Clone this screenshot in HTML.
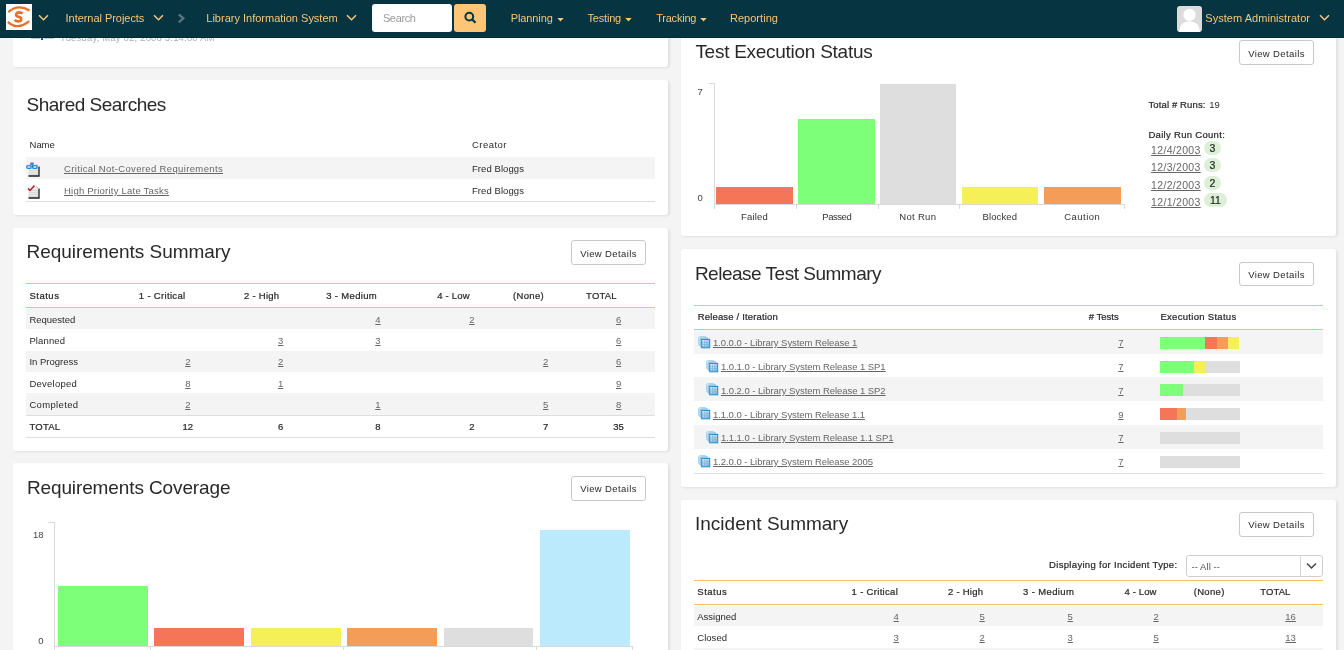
<!DOCTYPE html>
<html><head><meta charset="utf-8"><title>Dashboard</title>
<style>
*{box-sizing:border-box;margin:0;padding:0}
html,body{width:1344px;height:650px;overflow:hidden;background:#f4f4f4;font-family:"Liberation Sans",sans-serif;color:#333;position:relative}
.tx{position:absolute;white-space:nowrap}
.bx{position:absolute}
#hdr{position:absolute;left:0;top:0;width:1344px;height:38px;background:#073441;border-bottom:1px solid #032a37;z-index:10}
.card{position:absolute;background:#fff;border-radius:3px;box-shadow:1.5px 1px 2.5px rgba(0,0,0,0.08)}
.btn{position:absolute;width:75px;height:25px;border:1px solid #c9c9c9;border-radius:3px;background:#fff}
</style></head><body>
<div id="wrap" style="position:absolute;left:0;top:0;width:1344px;height:650px;will-change:transform">
<div class="card" style="left:13px;top:-40px;width:655px;height:107px"></div>
<div class="card" style="left:13px;top:80px;width:655px;height:135px"></div>
<div class="card" style="left:13px;top:228px;width:655px;height:223px"></div>
<div class="card" style="left:13px;top:463px;width:655px;height:237px"></div>
<div class="card" style="left:681px;top:-40px;width:655px;height:276px"></div>
<div class="card" style="left:681px;top:249px;width:655px;height:238px"></div>
<div class="card" style="left:681px;top:500px;width:655px;height:200px"></div>
<div class="tx" style="left:60.00px;top:33px;font-size:9.5px;line-height:9.5px;color:#acacac;letter-spacing:0.181px;">Tuesday, May 02, 2006 3:14:00 AM</div>
<svg class="bx" style="left:30px;top:33px" width="26" height="8"><path d="M1 5.5 H10 M14 5.5 H24" stroke="#c8c8c8" stroke-width="1.2" fill="none"/><rect x="11" y="2" width="2" height="5" fill="#2b3fb8"/></svg>
<div class="tx" style="left:26.50px;top:95px;font-size:19px;line-height:19px;color:#292929;letter-spacing:-0.500px;">Shared Searches</div>
<div class="tx" style="left:29.60px;top:140px;font-size:9.5px;line-height:9.5px;color:#292929;letter-spacing:-0.060px;">Name</div>
<div class="tx" style="left:472.00px;top:140px;font-size:9.5px;line-height:9.5px;color:#292929;letter-spacing:0.475px;">Creator</div>
<div class="bx" style="left:26px;top:157px;width:629px;height:22px;background:#f4f4f4;"></div>
<div class="bx" style="left:26px;top:201px;width:629px;height:1px;background:#dedede;"></div>
<div class="tx" style="left:64.00px;top:164px;font-size:9.5px;line-height:9.5px;color:#666;letter-spacing:0.355px;text-decoration:underline;">Critical Not-Covered Requirements</div>
<div class="tx" style="left:472.00px;top:164px;font-size:9.5px;line-height:9.5px;color:#292929;letter-spacing:0.071px;">Fred Bloggs</div>
<div class="tx" style="left:64.00px;top:186px;font-size:9.5px;line-height:9.5px;color:#666;letter-spacing:0.225px;text-decoration:underline;">High Priority Late Tasks</div>
<div class="tx" style="left:472.00px;top:186px;font-size:9.5px;line-height:9.5px;color:#292929;letter-spacing:0.071px;">Fred Bloggs</div>
<svg class="bx" style="left:26px;top:162px" width="16" height="16" viewBox="0 0 16 16">
<path d="M2 2.5 H10.5 L13 5 V14 H2Z" fill="#ebebeb"/>
<path d="M3 6.5 H12 M3 8.5 H12 M3 10.5 H12 M3 12.5 H12" stroke="#d2d2d2" stroke-width="0.8"/>
<path d="M13 4.5 V14 H2.5" stroke="#1e1e1e" stroke-width="1.3" fill="none"/>
<path d="M10 2.3 L13 5" stroke="#bbb" stroke-width="1"/>
</svg>
<svg class="bx" style="left:26px;top:162px" width="12" height="8" viewBox="0 0 12 8">
<rect x="4.2" y="0.5" width="3.6" height="2.6" rx="0.8" fill="#1d8fd6"/>
<rect x="0.8" y="3.6" width="4.2" height="2.8" rx="1" fill="none" stroke="#1d8fd6" stroke-width="1.4"/>
<rect x="6.8" y="3.6" width="4.2" height="2.8" rx="1" fill="none" stroke="#1d8fd6" stroke-width="1.4"/>
<path d="M6 3 V5 H7" stroke="#1d8fd6" stroke-width="1"/>
</svg>
<svg class="bx" style="left:26px;top:184px" width="16" height="16" viewBox="0 0 16 16">
<path d="M2 2.5 H10.5 L13 5 V14 H2Z" fill="#ebebeb"/>
<path d="M3 6.5 H12 M3 8.5 H12 M3 10.5 H12 M3 12.5 H12" stroke="#d2d2d2" stroke-width="0.8"/>
<path d="M13 4.5 V14 H2.5" stroke="#1e1e1e" stroke-width="1.3" fill="none"/>
<path d="M10 2.3 L13 5" stroke="#bbb" stroke-width="1"/>
</svg>
<svg class="bx" style="left:26px;top:184px" width="12" height="10" viewBox="0 0 12 10">
<path d="M2 4.5 L4 6.5 L8.5 1.5" stroke="#b0202a" stroke-width="1.5" fill="none"/>
</svg>
<div class="tx" style="left:26.50px;top:242px;font-size:19px;line-height:19px;color:#292929;letter-spacing:-0.042px;">Requirements Summary</div>
<div class="btn" style="left:571px;top:240px;height:25px"></div>
<div class="tx" style="left:580.15px;top:249px;font-size:9.5px;line-height:9.5px;color:#292929;letter-spacing:0.384px;">View Details</div>
<div class="bx" style="left:26px;top:283px;width:629px;height:1px;background:#f9bd6e;"></div>
<div class="bx" style="left:26px;top:307px;width:629px;height:1px;background:#f9bd6e;"></div>
<div class="tx" style="left:29.40px;top:291px;font-size:9.5px;line-height:9.5px;color:#292929;-webkit-text-stroke:0.22px currentColor;letter-spacing:0.511px;">Status</div>
<div class="tx" style="left:138.80px;top:291px;font-size:9.5px;line-height:9.5px;color:#292929;-webkit-text-stroke:0.22px currentColor;letter-spacing:0.329px;">1 - Critical</div>
<div class="tx" style="left:244.00px;top:291px;font-size:9.5px;line-height:9.5px;color:#292929;-webkit-text-stroke:0.22px currentColor;letter-spacing:0.267px;">2 - High</div>
<div class="tx" style="left:326.30px;top:291px;font-size:9.5px;line-height:9.5px;color:#292929;-webkit-text-stroke:0.22px currentColor;letter-spacing:0.319px;">3 - Medium</div>
<div class="tx" style="left:437.30px;top:291px;font-size:9.5px;line-height:9.5px;color:#292929;-webkit-text-stroke:0.22px currentColor;letter-spacing:0.193px;">4 - Low</div>
<div class="tx" style="left:513.00px;top:291px;font-size:9.5px;line-height:9.5px;color:#292929;-webkit-text-stroke:0.22px currentColor;letter-spacing:0.327px;">(None)</div>
<div class="tx" style="left:586.10px;top:291px;font-size:9.5px;line-height:9.5px;color:#292929;-webkit-text-stroke:0.22px currentColor;letter-spacing:0.153px;">TOTAL</div>
<div class="bx" style="left:26px;top:308px;width:629px;height:21px;background:#f4f4f4;"></div>
<div class="tx" style="left:29.40px;top:315px;font-size:9.5px;line-height:9.5px;color:#292929;letter-spacing:-0.005px;">Requested</div>
<div class="tx" style="left:375.26px;top:315px;font-size:9.5px;line-height:9.5px;color:#666;text-decoration:underline;">4</div>
<div class="tx" style="left:469.26px;top:315px;font-size:9.5px;line-height:9.5px;color:#666;text-decoration:underline;">2</div>
<div class="tx" style="left:615.96px;top:315px;font-size:9.5px;line-height:9.5px;color:#666;text-decoration:underline;">6</div>
<div class="tx" style="left:29.40px;top:336px;font-size:9.5px;line-height:9.5px;color:#292929;letter-spacing:0.134px;">Planned</div>
<div class="tx" style="left:278.06px;top:336px;font-size:9.5px;line-height:9.5px;color:#666;text-decoration:underline;">3</div>
<div class="tx" style="left:375.26px;top:336px;font-size:9.5px;line-height:9.5px;color:#666;text-decoration:underline;">3</div>
<div class="tx" style="left:615.96px;top:336px;font-size:9.5px;line-height:9.5px;color:#666;text-decoration:underline;">6</div>
<div class="bx" style="left:26px;top:351px;width:629px;height:21px;background:#f4f4f4;"></div>
<div class="tx" style="left:29.40px;top:357px;font-size:9.5px;line-height:9.5px;color:#292929;letter-spacing:-0.007px;">In Progress</div>
<div class="tx" style="left:185.16px;top:357px;font-size:9.5px;line-height:9.5px;color:#666;text-decoration:underline;">2</div>
<div class="tx" style="left:278.06px;top:357px;font-size:9.5px;line-height:9.5px;color:#666;text-decoration:underline;">2</div>
<div class="tx" style="left:543.06px;top:357px;font-size:9.5px;line-height:9.5px;color:#666;text-decoration:underline;">2</div>
<div class="tx" style="left:615.96px;top:357px;font-size:9.5px;line-height:9.5px;color:#666;text-decoration:underline;">6</div>
<div class="tx" style="left:29.40px;top:379px;font-size:9.5px;line-height:9.5px;color:#292929;letter-spacing:0.253px;">Developed</div>
<div class="tx" style="left:185.16px;top:379px;font-size:9.5px;line-height:9.5px;color:#666;text-decoration:underline;">8</div>
<div class="tx" style="left:278.06px;top:379px;font-size:9.5px;line-height:9.5px;color:#666;text-decoration:underline;">1</div>
<div class="tx" style="left:615.96px;top:379px;font-size:9.5px;line-height:9.5px;color:#666;text-decoration:underline;">9</div>
<div class="bx" style="left:26px;top:393px;width:629px;height:22px;background:#f4f4f4;"></div>
<div class="tx" style="left:29.40px;top:400px;font-size:9.5px;line-height:9.5px;color:#292929;letter-spacing:0.340px;">Completed</div>
<div class="tx" style="left:185.16px;top:400px;font-size:9.5px;line-height:9.5px;color:#666;text-decoration:underline;">2</div>
<div class="tx" style="left:375.26px;top:400px;font-size:9.5px;line-height:9.5px;color:#666;text-decoration:underline;">1</div>
<div class="tx" style="left:543.06px;top:400px;font-size:9.5px;line-height:9.5px;color:#666;text-decoration:underline;">5</div>
<div class="tx" style="left:615.96px;top:400px;font-size:9.5px;line-height:9.5px;color:#666;text-decoration:underline;">8</div>
<div class="bx" style="left:26px;top:415px;width:629px;height:1px;background:#dedede;"></div>
<div class="tx" style="left:29.40px;top:422px;font-size:9.5px;line-height:9.5px;color:#292929;-webkit-text-stroke:0.22px currentColor;letter-spacing:0.253px;">TOTAL</div>
<div class="tx" style="left:182.52px;top:422px;font-size:9.5px;line-height:9.5px;color:#292929;-webkit-text-stroke:0.22px currentColor;">12</div>
<div class="tx" style="left:278.06px;top:422px;font-size:9.5px;line-height:9.5px;color:#292929;-webkit-text-stroke:0.22px currentColor;">6</div>
<div class="tx" style="left:375.26px;top:422px;font-size:9.5px;line-height:9.5px;color:#292929;-webkit-text-stroke:0.22px currentColor;">8</div>
<div class="tx" style="left:469.26px;top:422px;font-size:9.5px;line-height:9.5px;color:#292929;-webkit-text-stroke:0.22px currentColor;">2</div>
<div class="tx" style="left:543.06px;top:422px;font-size:9.5px;line-height:9.5px;color:#292929;-webkit-text-stroke:0.22px currentColor;">7</div>
<div class="tx" style="left:613.32px;top:422px;font-size:9.5px;line-height:9.5px;color:#292929;-webkit-text-stroke:0.22px currentColor;">35</div>
<div class="bx" style="left:26px;top:437px;width:629px;height:1px;background:#dedede;"></div>
<div class="tx" style="left:26.90px;top:478px;font-size:19px;line-height:19px;color:#292929;letter-spacing:-0.115px;">Requirements Coverage</div>
<div class="btn" style="left:571px;top:476px;height:25px"></div>
<div class="tx" style="left:580.15px;top:484px;font-size:9.5px;line-height:9.5px;color:#292929;letter-spacing:0.384px;">View Details</div>
<div class="bx" style="left:54px;top:522px;width:1px;height:124px;background:#dadada;"></div>
<div class="bx" style="left:48px;top:522px;width:7px;height:1px;background:#dadada;"></div>
<div class="bx" style="left:54px;top:646px;width:579px;height:1px;background:#dadada;"></div>
<div class="bx" style="left:54px;top:646px;width:1px;height:4px;background:#dadada;"></div>
<div class="bx" style="left:150px;top:646px;width:1px;height:4px;background:#dadada;"></div>
<div class="bx" style="left:343px;top:646px;width:1px;height:4px;background:#dadada;"></div>
<div class="bx" style="left:536px;top:646px;width:1px;height:4px;background:#dadada;"></div>
<div class="bx" style="left:632px;top:646px;width:1px;height:4px;background:#dadada;"></div>
<div class="tx" style="left:32.93px;top:530px;font-size:9.5px;line-height:9.5px;color:#444;">18</div>
<div class="tx" style="left:38.22px;top:636px;font-size:9.5px;line-height:9.5px;color:#444;">0</div>
<div class="bx" style="left:58px;top:586px;width:90px;height:60px;background:#7dff7a;"></div>
<div class="bx" style="left:154px;top:628px;width:90px;height:18px;background:#f47557;"></div>
<div class="bx" style="left:251px;top:628px;width:90px;height:18px;background:#f5f058;"></div>
<div class="bx" style="left:347px;top:628px;width:90px;height:18px;background:#f39d58;"></div>
<div class="bx" style="left:444px;top:628px;width:89px;height:18px;background:#dedede;"></div>
<div class="bx" style="left:540px;top:530px;width:90px;height:116px;background:#bbeafd;"></div>
<div class="tx" style="left:695.40px;top:42px;font-size:19px;line-height:19px;color:#292929;letter-spacing:-0.271px;">Test Execution Status</div>
<div class="btn" style="left:1239px;top:40px;height:25px"></div>
<div class="tx" style="left:1248.15px;top:49px;font-size:9.5px;line-height:9.5px;color:#292929;letter-spacing:0.384px;">View Details</div>
<div class="bx" style="left:714px;top:83px;width:1px;height:121px;background:#dadada;"></div>
<div class="bx" style="left:709px;top:83px;width:6px;height:1px;background:#dadada;"></div>
<div class="bx" style="left:714px;top:204px;width:411px;height:1px;background:#dadada;"></div>
<div class="bx" style="left:714px;top:204px;width:1px;height:5px;background:#dadada;"></div>
<div class="bx" style="left:796px;top:204px;width:1px;height:5px;background:#dadada;"></div>
<div class="bx" style="left:878px;top:204px;width:1px;height:5px;background:#dadada;"></div>
<div class="bx" style="left:959px;top:204px;width:1px;height:5px;background:#dadada;"></div>
<div class="bx" style="left:1124px;top:204px;width:1px;height:5px;background:#dadada;"></div>
<div class="tx" style="left:697.62px;top:87px;font-size:9.5px;line-height:9.5px;color:#444;">7</div>
<div class="tx" style="left:697.62px;top:193px;font-size:9.5px;line-height:9.5px;color:#444;">0</div>
<div class="bx" style="left:716px;top:187px;width:77px;height:17px;background:#f47557;"></div>
<div class="bx" style="left:798px;top:119px;width:77px;height:85px;background:#7dff7a;"></div>
<div class="bx" style="left:880px;top:84px;width:76px;height:120px;background:#dedede;"></div>
<div class="bx" style="left:962px;top:187px;width:76px;height:17px;background:#f5f058;"></div>
<div class="bx" style="left:1044px;top:187px;width:77px;height:17px;background:#f39d58;"></div>
<div class="tx" style="left:741.00px;top:212px;font-size:9.5px;line-height:9.5px;color:#333;letter-spacing:0.188px;">Failed</div>
<div class="tx" style="left:822.30px;top:212px;font-size:9.5px;line-height:9.5px;color:#333;letter-spacing:-0.448px;">Passed</div>
<div class="tx" style="left:899.30px;top:212px;font-size:9.5px;line-height:9.5px;color:#333;letter-spacing:0.307px;">Not Run</div>
<div class="tx" style="left:982.50px;top:212px;font-size:9.5px;line-height:9.5px;color:#333;letter-spacing:0.115px;">Blocked</div>
<div class="tx" style="left:1064.25px;top:212px;font-size:9.5px;line-height:9.5px;color:#333;letter-spacing:0.480px;">Caution</div>
<div class="tx" style="left:1148.40px;top:100px;font-size:9.5px;line-height:9.5px;color:#292929;-webkit-text-stroke:0.22px currentColor;letter-spacing:0.135px;">Total # Runs:</div>
<div class="tx" style="left:1209.20px;top:100px;font-size:9.5px;line-height:9.5px;color:#292929;letter-spacing:0.117px;">19</div>
<div class="tx" style="left:1148.40px;top:130px;font-size:9.5px;line-height:9.5px;color:#292929;-webkit-text-stroke:0.22px currentColor;letter-spacing:0.306px;">Daily Run Count:</div>
<div class="tx" style="left:1151.10px;top:145px;font-size:10.5px;line-height:10.5px;color:#666;letter-spacing:0.321px;text-decoration:underline;">12/4/2003</div>
<div class="bx" style="left:1204.3px;top:141px;width:16.4px;height:14px;background:#dcf0d6;border-radius:7px"></div>
<div class="tx" style="left:1209.58px;top:143px;font-size:10.5px;line-height:10.5px;color:#292929;-webkit-text-stroke:0.22px currentColor;">3</div>
<div class="tx" style="left:1151.10px;top:162px;font-size:10.5px;line-height:10.5px;color:#666;letter-spacing:0.321px;text-decoration:underline;">12/3/2003</div>
<div class="bx" style="left:1204.3px;top:158px;width:16.4px;height:14px;background:#dcf0d6;border-radius:7px"></div>
<div class="tx" style="left:1209.58px;top:160px;font-size:10.5px;line-height:10.5px;color:#292929;-webkit-text-stroke:0.22px currentColor;">3</div>
<div class="tx" style="left:1151.10px;top:180px;font-size:10.5px;line-height:10.5px;color:#666;letter-spacing:0.321px;text-decoration:underline;">12/2/2003</div>
<div class="bx" style="left:1204.3px;top:176px;width:16.4px;height:14px;background:#dcf0d6;border-radius:7px"></div>
<div class="tx" style="left:1209.58px;top:178px;font-size:10.5px;line-height:10.5px;color:#292929;-webkit-text-stroke:0.22px currentColor;">2</div>
<div class="tx" style="left:1151.10px;top:197px;font-size:10.5px;line-height:10.5px;color:#666;letter-spacing:0.321px;text-decoration:underline;">12/1/2003</div>
<div class="bx" style="left:1204.3px;top:193px;width:22.3px;height:14px;background:#dcf0d6;border-radius:7px"></div>
<div class="tx" style="left:1210.00px;top:195px;font-size:10.5px;line-height:10.5px;color:#292929;-webkit-text-stroke:0.22px currentColor;">11</div>
<div class="tx" style="left:694.90px;top:264px;font-size:19px;line-height:19px;color:#292929;letter-spacing:-0.492px;">Release Test Summary</div>
<div class="btn" style="left:1239px;top:262px;height:24px"></div>
<div class="tx" style="left:1248.15px;top:270px;font-size:9.5px;line-height:9.5px;color:#292929;letter-spacing:0.384px;">View Details</div>
<div class="bx" style="left:694px;top:305px;width:629px;height:1px;background:#f9bd6e;"></div>
<div class="bx" style="left:694px;top:329px;width:629px;height:1px;background:#f9bd6e;"></div>
<div class="tx" style="left:697.70px;top:312px;font-size:9.5px;line-height:9.5px;color:#292929;-webkit-text-stroke:0.22px currentColor;letter-spacing:0.169px;">Release / Iteration</div>
<div class="tx" style="left:1088.70px;top:312px;font-size:9.5px;line-height:9.5px;color:#292929;-webkit-text-stroke:0.22px currentColor;letter-spacing:0.025px;"># Tests</div>
<div class="tx" style="left:1160.40px;top:312px;font-size:9.5px;line-height:9.5px;color:#292929;-webkit-text-stroke:0.22px currentColor;letter-spacing:0.301px;">Execution Status</div>
<div class="bx" style="left:694px;top:330px;width:629px;height:24px;background:#f4f4f4;"></div>
<svg class="bx" style="left:698px;top:335.5px" width="13" height="13" viewBox="0 0 13 13">
<defs><linearGradient id="rg698335.5" x1="0" y1="0" x2="1" y2="1"><stop offset="0" stop-color="#e2f2fb"/><stop offset="1" stop-color="#7fbde3"/></linearGradient></defs>
<rect x="0.6" y="0.6" width="8" height="8.6" rx="1.5" fill="#d6edf9" stroke="#9fd0ec" stroke-width="0.9"/>
<rect x="2.2" y="2" width="8" height="8.6" rx="1" fill="#c6e5f6" stroke="#74b8e0" stroke-width="0.9"/>
<rect x="3.7" y="3.4" width="8" height="8.4" fill="url(#rg698335.5)" stroke="#2c86c2" stroke-width="1"/>
<path d="M6.5 4.2 V11.2 M9 4.2 V11.2 M4.2 6.3 H11.2 M4.2 8.3 H11.2 M4.2 10.2 H11.2" stroke="#5fa6d6" stroke-width="0.6" opacity="0.8"/>
</svg>
<div class="tx" style="left:713.00px;top:338px;font-size:9.5px;line-height:9.5px;color:#666;letter-spacing:-0.059px;text-decoration:underline;">1.0.0.0 - Library System Release 1</div>
<div class="tx" style="left:1118.26px;top:338px;font-size:9.5px;line-height:9.5px;color:#666;text-decoration:underline;">7</div>
<div class="bx" style="left:1160px;top:337px;width:45px;height:12px;background:#7dff7a;"></div>
<div class="bx" style="left:1205px;top:337px;width:12px;height:12px;background:#f47557;"></div>
<div class="bx" style="left:1217px;top:337px;width:11px;height:12px;background:#f39d58;"></div>
<div class="bx" style="left:1228px;top:337px;width:11px;height:12px;background:#f5f058;"></div>
<svg class="bx" style="left:706px;top:359.5px" width="13" height="13" viewBox="0 0 13 13">
<defs><linearGradient id="rg706359.5" x1="0" y1="0" x2="1" y2="1"><stop offset="0" stop-color="#e2f2fb"/><stop offset="1" stop-color="#7fbde3"/></linearGradient></defs>
<rect x="0.6" y="0.6" width="8" height="8.6" rx="1.5" fill="#d6edf9" stroke="#9fd0ec" stroke-width="0.9"/>
<rect x="2.2" y="2" width="8" height="8.6" rx="1" fill="#c6e5f6" stroke="#74b8e0" stroke-width="0.9"/>
<rect x="3.7" y="3.4" width="8" height="8.4" fill="url(#rg706359.5)" stroke="#2c86c2" stroke-width="1"/>
<path d="M6.5 4.2 V11.2 M9 4.2 V11.2 M4.2 6.3 H11.2 M4.2 8.3 H11.2 M4.2 10.2 H11.2" stroke="#5fa6d6" stroke-width="0.6" opacity="0.8"/>
</svg>
<div class="tx" style="left:721.00px;top:362px;font-size:9.5px;line-height:9.5px;color:#666;letter-spacing:-0.060px;text-decoration:underline;">1.0.1.0 - Library System Release 1 SP1</div>
<div class="tx" style="left:1118.26px;top:362px;font-size:9.5px;line-height:9.5px;color:#666;text-decoration:underline;">7</div>
<div class="bx" style="left:1160px;top:361px;width:34px;height:12px;background:#7dff7a;"></div>
<div class="bx" style="left:1194px;top:361px;width:11px;height:12px;background:#f5f058;"></div>
<div class="bx" style="left:1205px;top:361px;width:35px;height:12px;background:#dedede;"></div>
<div class="bx" style="left:694px;top:377px;width:629px;height:24px;background:#f4f4f4;"></div>
<svg class="bx" style="left:706px;top:382.5px" width="13" height="13" viewBox="0 0 13 13">
<defs><linearGradient id="rg706382.5" x1="0" y1="0" x2="1" y2="1"><stop offset="0" stop-color="#e2f2fb"/><stop offset="1" stop-color="#7fbde3"/></linearGradient></defs>
<rect x="0.6" y="0.6" width="8" height="8.6" rx="1.5" fill="#d6edf9" stroke="#9fd0ec" stroke-width="0.9"/>
<rect x="2.2" y="2" width="8" height="8.6" rx="1" fill="#c6e5f6" stroke="#74b8e0" stroke-width="0.9"/>
<rect x="3.7" y="3.4" width="8" height="8.4" fill="url(#rg706382.5)" stroke="#2c86c2" stroke-width="1"/>
<path d="M6.5 4.2 V11.2 M9 4.2 V11.2 M4.2 6.3 H11.2 M4.2 8.3 H11.2 M4.2 10.2 H11.2" stroke="#5fa6d6" stroke-width="0.6" opacity="0.8"/>
</svg>
<div class="tx" style="left:721.00px;top:386px;font-size:9.5px;line-height:9.5px;color:#666;letter-spacing:-0.060px;text-decoration:underline;">1.0.2.0 - Library System Release 1 SP2</div>
<div class="tx" style="left:1118.26px;top:386px;font-size:9.5px;line-height:9.5px;color:#666;text-decoration:underline;">7</div>
<div class="bx" style="left:1160px;top:384px;width:23px;height:12px;background:#7dff7a;"></div>
<div class="bx" style="left:1183px;top:384px;width:57px;height:12px;background:#dedede;"></div>
<svg class="bx" style="left:698px;top:406.5px" width="13" height="13" viewBox="0 0 13 13">
<defs><linearGradient id="rg698406.5" x1="0" y1="0" x2="1" y2="1"><stop offset="0" stop-color="#e2f2fb"/><stop offset="1" stop-color="#7fbde3"/></linearGradient></defs>
<rect x="0.6" y="0.6" width="8" height="8.6" rx="1.5" fill="#d6edf9" stroke="#9fd0ec" stroke-width="0.9"/>
<rect x="2.2" y="2" width="8" height="8.6" rx="1" fill="#c6e5f6" stroke="#74b8e0" stroke-width="0.9"/>
<rect x="3.7" y="3.4" width="8" height="8.4" fill="url(#rg698406.5)" stroke="#2c86c2" stroke-width="1"/>
<path d="M6.5 4.2 V11.2 M9 4.2 V11.2 M4.2 6.3 H11.2 M4.2 8.3 H11.2 M4.2 10.2 H11.2" stroke="#5fa6d6" stroke-width="0.6" opacity="0.8"/>
</svg>
<div class="tx" style="left:713.00px;top:410px;font-size:9.5px;line-height:9.5px;color:#666;letter-spacing:-0.059px;text-decoration:underline;">1.1.0.0 - Library System Release 1.1</div>
<div class="tx" style="left:1118.26px;top:410px;font-size:9.5px;line-height:9.5px;color:#666;text-decoration:underline;">9</div>
<div class="bx" style="left:1160px;top:408px;width:17px;height:12px;background:#f47557;"></div>
<div class="bx" style="left:1177px;top:408px;width:9px;height:12px;background:#f39d58;"></div>
<div class="bx" style="left:1186px;top:408px;width:54px;height:12px;background:#dedede;"></div>
<div class="bx" style="left:694px;top:425px;width:629px;height:24px;background:#f4f4f4;"></div>
<svg class="bx" style="left:706px;top:430.5px" width="13" height="13" viewBox="0 0 13 13">
<defs><linearGradient id="rg706430.5" x1="0" y1="0" x2="1" y2="1"><stop offset="0" stop-color="#e2f2fb"/><stop offset="1" stop-color="#7fbde3"/></linearGradient></defs>
<rect x="0.6" y="0.6" width="8" height="8.6" rx="1.5" fill="#d6edf9" stroke="#9fd0ec" stroke-width="0.9"/>
<rect x="2.2" y="2" width="8" height="8.6" rx="1" fill="#c6e5f6" stroke="#74b8e0" stroke-width="0.9"/>
<rect x="3.7" y="3.4" width="8" height="8.4" fill="url(#rg706430.5)" stroke="#2c86c2" stroke-width="1"/>
<path d="M6.5 4.2 V11.2 M9 4.2 V11.2 M4.2 6.3 H11.2 M4.2 8.3 H11.2 M4.2 10.2 H11.2" stroke="#5fa6d6" stroke-width="0.6" opacity="0.8"/>
</svg>
<div class="tx" style="left:721.00px;top:433px;font-size:9.5px;line-height:9.5px;color:#666;letter-spacing:-0.060px;text-decoration:underline;">1.1.1.0 - Library System Release 1.1 SP1</div>
<div class="tx" style="left:1118.26px;top:433px;font-size:9.5px;line-height:9.5px;color:#666;text-decoration:underline;">7</div>
<div class="bx" style="left:1160px;top:432px;width:80px;height:12px;background:#dedede;"></div>
<svg class="bx" style="left:698px;top:454.5px" width="13" height="13" viewBox="0 0 13 13">
<defs><linearGradient id="rg698454.5" x1="0" y1="0" x2="1" y2="1"><stop offset="0" stop-color="#e2f2fb"/><stop offset="1" stop-color="#7fbde3"/></linearGradient></defs>
<rect x="0.6" y="0.6" width="8" height="8.6" rx="1.5" fill="#d6edf9" stroke="#9fd0ec" stroke-width="0.9"/>
<rect x="2.2" y="2" width="8" height="8.6" rx="1" fill="#c6e5f6" stroke="#74b8e0" stroke-width="0.9"/>
<rect x="3.7" y="3.4" width="8" height="8.4" fill="url(#rg698454.5)" stroke="#2c86c2" stroke-width="1"/>
<path d="M6.5 4.2 V11.2 M9 4.2 V11.2 M4.2 6.3 H11.2 M4.2 8.3 H11.2 M4.2 10.2 H11.2" stroke="#5fa6d6" stroke-width="0.6" opacity="0.8"/>
</svg>
<div class="tx" style="left:713.00px;top:457px;font-size:9.5px;line-height:9.5px;color:#666;letter-spacing:-0.060px;text-decoration:underline;">1.2.0.0 - Library System Release 2005</div>
<div class="tx" style="left:1118.26px;top:457px;font-size:9.5px;line-height:9.5px;color:#666;text-decoration:underline;">7</div>
<div class="bx" style="left:1160px;top:456px;width:80px;height:12px;background:#dedede;"></div>
<div class="bx" style="left:694px;top:473px;width:629px;height:1px;background:#dedede;"></div>
<div class="tx" style="left:695.00px;top:514px;font-size:19px;line-height:19px;color:#292929;letter-spacing:0.006px;">Incident Summary</div>
<div class="btn" style="left:1239px;top:512px;height:25px"></div>
<div class="tx" style="left:1248.15px;top:520px;font-size:9.5px;line-height:9.5px;color:#292929;letter-spacing:0.384px;">View Details</div>
<div class="tx" style="left:1049.10px;top:560px;font-size:9.5px;line-height:9.5px;color:#292929;-webkit-text-stroke:0.22px currentColor;letter-spacing:0.315px;">Displaying for Incident Type:</div>
<div class="bx" style="left:1186px;top:555px;width:137px;height:22px;border:1px solid #cfcfcf;border-radius:3px;background:#fff"></div>
<div class="bx" style="left:1300px;top:556px;width:1px;height:20px;background:#d6d6d6;"></div>
<div class="tx" style="left:1191.40px;top:562px;font-size:9.5px;line-height:9.5px;color:#555;letter-spacing:0.082px;">-- All --</div>
<svg class="bx" style="left:1306px;top:562px" width="11" height="8" viewBox="0 0 11 8"><path d="M1 1.5 L5.5 6 L10 1.5" stroke="#444" stroke-width="1.5" fill="none"/></svg>
<div class="bx" style="left:694px;top:580px;width:629px;height:1px;background:#f9bd6e;"></div>
<div class="bx" style="left:694px;top:604px;width:629px;height:1px;background:#f9bd6e;"></div>
<div class="tx" style="left:697.30px;top:587px;font-size:9.5px;line-height:9.5px;color:#292929;-webkit-text-stroke:0.22px currentColor;letter-spacing:0.511px;">Status</div>
<div class="tx" style="left:851.60px;top:587px;font-size:9.5px;line-height:9.5px;color:#292929;-webkit-text-stroke:0.22px currentColor;letter-spacing:0.312px;">1 - Critical</div>
<div class="tx" style="left:948.00px;top:587px;font-size:9.5px;line-height:9.5px;color:#292929;-webkit-text-stroke:0.22px currentColor;letter-spacing:0.255px;">2 - High</div>
<div class="tx" style="left:1023.00px;top:587px;font-size:9.5px;line-height:9.5px;color:#292929;-webkit-text-stroke:0.22px currentColor;letter-spacing:0.369px;">3 - Medium</div>
<div class="tx" style="left:1124.60px;top:587px;font-size:9.5px;line-height:9.5px;color:#292929;-webkit-text-stroke:0.22px currentColor;letter-spacing:0.121px;">4 - Low</div>
<div class="tx" style="left:1193.70px;top:587px;font-size:9.5px;line-height:9.5px;color:#292929;-webkit-text-stroke:0.22px currentColor;letter-spacing:0.327px;">(None)</div>
<div class="tx" style="left:1260.30px;top:587px;font-size:9.5px;line-height:9.5px;color:#292929;-webkit-text-stroke:0.22px currentColor;letter-spacing:0.093px;">TOTAL</div>
<div class="bx" style="left:694px;top:606px;width:629px;height:20px;background:#f4f4f4;"></div>
<div class="tx" style="left:697.30px;top:612px;font-size:9.5px;line-height:9.5px;color:#292929;letter-spacing:-0.010px;">Assigned</div>
<div class="tx" style="left:893.52px;top:612px;font-size:9.5px;line-height:9.5px;color:#666;text-decoration:underline;">4</div>
<div class="tx" style="left:979.42px;top:612px;font-size:9.5px;line-height:9.5px;color:#666;text-decoration:underline;">5</div>
<div class="tx" style="left:1067.62px;top:612px;font-size:9.5px;line-height:9.5px;color:#666;text-decoration:underline;">5</div>
<div class="tx" style="left:1153.42px;top:612px;font-size:9.5px;line-height:9.5px;color:#666;text-decoration:underline;">2</div>
<div class="tx" style="left:1285.33px;top:612px;font-size:9.5px;line-height:9.5px;color:#666;text-decoration:underline;">16</div>
<div class="tx" style="left:697.30px;top:633px;font-size:9.5px;line-height:9.5px;color:#292929;letter-spacing:0.022px;">Closed</div>
<div class="tx" style="left:893.52px;top:633px;font-size:9.5px;line-height:9.5px;color:#666;text-decoration:underline;">3</div>
<div class="tx" style="left:979.42px;top:633px;font-size:9.5px;line-height:9.5px;color:#666;text-decoration:underline;">2</div>
<div class="tx" style="left:1067.62px;top:633px;font-size:9.5px;line-height:9.5px;color:#666;text-decoration:underline;">3</div>
<div class="tx" style="left:1153.42px;top:633px;font-size:9.5px;line-height:9.5px;color:#666;text-decoration:underline;">5</div>
<div class="tx" style="left:1285.33px;top:633px;font-size:9.5px;line-height:9.5px;color:#666;text-decoration:underline;">13</div>
<div class="bx" style="left:694px;top:648px;width:629px;height:2px;background:#f4f4f4;"></div>
<div id="hdr">
<div class="bx" style="left:6px;top:4px;width:26px;height:26px;background:#fff">
<svg width="26" height="26" viewBox="0 0 26 26">
<path d="M2.3 8.2 Q12 -0.5 23.5 6.6" stroke="#e8702a" stroke-width="2.3" fill="none"/>
<path d="M1.8 17.8 Q11.5 26.8 23.2 17.2" stroke="#e8702a" stroke-width="2.3" fill="none"/>
<path d="M16.6 9.6 Q15.6 8.3 13.2 8.3 Q10.3 8.4 10.2 10.7 Q10.2 12.3 12.9 12.9 Q15.3 13.5 15.2 15.3 Q15 17.3 12.3 17.4 Q9.8 17.4 8.7 15.9" stroke="#e8702a" stroke-width="2.7" fill="none" stroke-linecap="butt"/>
</svg></div>
<svg class="bx" style="left:38px;top:14px" width="11" height="8" viewBox="0 0 11 8"><path d="M1 1.2 L5.5 5.8 L10 1.2" stroke="#f3c77c" stroke-width="1.5" fill="none"/></svg>
<div class="tx" style="left:65.60px;top:13px;font-size:11px;line-height:11px;color:#f3c77c;letter-spacing:-0.046px;">Internal Projects</div>
<svg class="bx" style="left:153px;top:14px" width="11" height="8" viewBox="0 0 11 8"><path d="M1 1.2 L5.5 5.8 L10 1.2" stroke="#f3c77c" stroke-width="1.5" fill="none"/></svg>
<svg class="bx" style="left:177px;top:12.5px" width="9" height="11" viewBox="0 0 9 11"><path d="M1.8 1.3 L6.3 5.3 L1.8 9.3" stroke="#5a737c" stroke-width="2.3" fill="none"/></svg>
<div class="tx" style="left:206.30px;top:13px;font-size:11px;line-height:11px;color:#f3c77c;letter-spacing:-0.001px;">Library Information System</div>
<svg class="bx" style="left:346px;top:14px" width="11" height="8" viewBox="0 0 11 8"><path d="M1 1.2 L5.5 5.8 L10 1.2" stroke="#f3c77c" stroke-width="1.5" fill="none"/></svg>
<div class="bx" style="left:372px;top:4px;width:80px;height:28px;background:#fff;border-radius:3px"></div>
<div class="tx" style="left:382.90px;top:13px;font-size:11px;line-height:11px;color:#9a9a9a;letter-spacing:-0.359px;">Search</div>
<div class="bx" style="left:454px;top:4px;width:32px;height:28px;background:#fdc676;border-radius:3px">
<svg width="32" height="28" viewBox="0 0 32 28"><circle cx="15.3" cy="12.6" r="3.9" stroke="#073441" stroke-width="2" fill="none"/><path d="M18.2 15.5 L21.5 18.8" stroke="#073441" stroke-width="2.2"/></svg></div>
<div class="tx" style="left:510.80px;top:13px;font-size:11px;line-height:11px;color:#f3c77c;letter-spacing:-0.114px;">Planning</div>
<svg class="bx" style="left:556.5px;top:17.5px" width="7" height="4" viewBox="0 0 7 4"><path d="M0.3 0 L6.7 0 L3.5 3.6Z" fill="#f3c77c"/></svg>
<div class="tx" style="left:587.50px;top:13px;font-size:11px;line-height:11px;color:#f3c77c;letter-spacing:-0.193px;">Testing</div>
<svg class="bx" style="left:625px;top:17.5px" width="7" height="4" viewBox="0 0 7 4"><path d="M0.3 0 L6.7 0 L3.5 3.6Z" fill="#f3c77c"/></svg>
<div class="tx" style="left:656.20px;top:13px;font-size:11px;line-height:11px;color:#f3c77c;letter-spacing:-0.221px;">Tracking</div>
<svg class="bx" style="left:699.5px;top:17.5px" width="7" height="4" viewBox="0 0 7 4"><path d="M0.3 0 L6.7 0 L3.5 3.6Z" fill="#f3c77c"/></svg>
<div class="tx" style="left:729.90px;top:13px;font-size:11px;line-height:11px;color:#f3c77c;letter-spacing:0.045px;">Reporting</div>
<div class="bx" style="left:1177px;top:6px;width:25px;height:26px;background:#dcdcdc;border-radius:3px;overflow:hidden">
<svg width="25" height="26" viewBox="0 0 25 26"><circle cx="12.5" cy="8.9" r="6.1" fill="#fff"/><path d="M1.9 27 Q2.3 15.3 12.5 15.3 Q22.7 15.3 23.1 27Z" fill="#fff"/></svg></div>
<div class="tx" style="left:1205.30px;top:13px;font-size:11px;line-height:11px;color:#f3c77c;letter-spacing:0.039px;">System Administrator</div>
<svg class="bx" style="left:1319px;top:14px" width="11" height="8" viewBox="0 0 11 8"><path d="M1 1.2 L5.5 5.8 L10 1.2" stroke="#f3c77c" stroke-width="1.5" fill="none"/></svg>
</div>
</div>
</body></html>
